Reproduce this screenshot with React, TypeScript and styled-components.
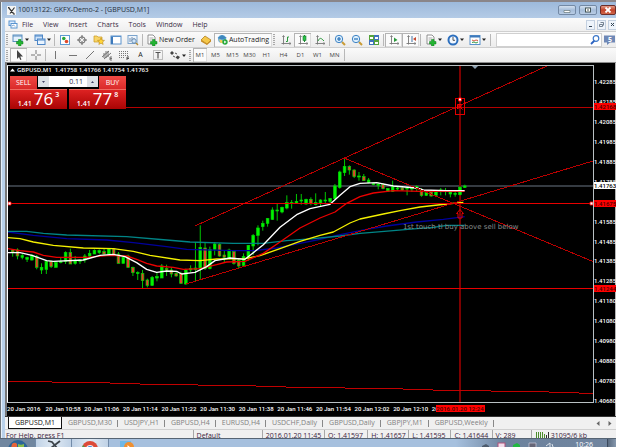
import React from "react";
import styled, { createGlobalStyle, css } from "styled-components";

const UI = '"Open Sans", "Noto Sans", sans-serif';

const Global = createGlobalStyle`
  * { box-sizing: border-box; }
  html, body { margin: 0; background: #fff; overflow: hidden; }
  button, input { font: inherit; color: inherit; margin: 0; padding: 0; border: 0; background: none; }
  svg { display: block; flex: none; }
`;

const Desktop = styled.div`
  display: flex;
  flex-direction: column;
  height: 100vh;
  margin-right: 9px;
  overflow: hidden;
  font: 7px/10px ${UI};
  color: #1c1c1c;
  white-space: nowrap;
`;

const Window = styled.main`
  flex: 1;
  min-height: 0;
  display: flex;
  flex-direction: column;
  padding-left: 5px;
  border-top: 2px solid #8a8589;
  background: linear-gradient(90deg, #6f7478 0 1px, #e6f0fa 1px 2px, #b9d1ea 2px 5px, #f0f0f0 5px);
`;

const TitleBar = styled.header`
  display: flex;
  align-items: center;
  gap: 2px;
  height: 16px;
  margin-left: -3px;
  padding-left: 5px;
  background: linear-gradient(#9db9db, #b4cbe6);
  color: #26303c;
  h1 { flex: 1; margin: 0; font: inherit; }
`;

const Caption = styled.button<{ $close?: boolean }>`
  display: grid;
  place-items: center;
  width: ${(p) => (p.$close ? 16 : 18)}px;
  height: 10px;
  margin-left: 1px;
  border: 1px solid ${(p) => (p.$close ? "#6b2e2a" : "#7389a5")};
  border-radius: 2px;
  background: ${(p) => (p.$close ? "linear-gradient(#e39b88, #c2432b 50%, #d0664a)" : "linear-gradient(#d3e0ef, #a6bdd9 50%, #b9cde5)")};
`;

const MenuBar = styled.nav`
  display: flex;
  align-items: center;
  gap: 10px;
  height: 13px;
  padding-left: 3px;
  background: linear-gradient(#fbfbfb, #efefef);
  color: #3a2c44;
`;
const MenuItem = styled.button`
  height: 11px;
  &:first-of-type { margin-left: -6px; }
`;
const Spacer = styled.span`flex: 1;`;
const MdiButtons = styled.div`display: flex; gap: 2px;`;
const MdiButton = styled.button`
  display: grid;
  place-items: center;
  width: 9px;
  height: 10px;
  border: 1px solid #c3d0e0;
  background: #eef4fb;
  &:last-child { width: 8px; border-right: 0; }
`;

const ToolBar = styled.div<{ $h: number }>`
  display: flex;
  align-items: center;
  height: ${(p) => p.$h}px;
  border-top: 1px solid #cfcfcf;
  background: linear-gradient(#fafafa, #ececec);
`;
const Grip = styled.span`
  width: 2px;
  height: 11px;
  margin: 0 2px 0 1px;
  background: repeating-linear-gradient(#a8a8a8 0 1px, #f0f0f0 1px 2px);
`;
const pressed = css`
  background: #fbfbfb;
  box-shadow: inset 1px 1px 0 #b4b4b4, inset -1px -1px 0 #dcdcdc;
`;
const Tool = styled.button<{ $w?: number; $on?: boolean }>`
  display: flex;
  align-items: center;
  justify-content: center;
  gap: 1px;
  flex: none;
  width: ${(p) => p.$w ?? 17}px;
  height: 14px;
  ${(p) => p.$on && pressed}
`;
const Period = styled(Tool)`
  font-size: 6px;
  color: #444;
`;
const Sep = styled.span`
  width: 1px;
  height: 12px;
  margin: 0 1px;
  background: #b8b8b8;
`;
const Search = styled.label`
  flex: 1;
  display: flex;
  align-items: center;
  height: 14px;
  margin-left: 4px;
  background: #fff;
  border: 1px solid #d0d0d0;
  input { flex: 1; min-width: 0; outline: 0; }
`;

const ChartArea = styled.section`
  flex: 1;
  min-height: 0;
  display: grid;
  grid-template-columns: minmax(0, 1fr) 22px;
  grid-template-rows: minmax(0, 1fr) 13px;
  padding-top: 2px;
  border: solid;
  border-width: 1px 0 0 2px;
  border-color: #8b8b8b #000 #000 #777;
  background: linear-gradient(270deg, #b4b4b4 1px, #000 1px);
`;
const Plot = styled.div`
  position: relative;
  border: 1px solid #b9c0c3;
  border-left-color: #fff;
  > svg { width: 100%; height: 100%; }
`;
const Note = styled.p`
  position: absolute;
  left: 67.5%;
  top: 46%;
  margin: 0;
  font: 7px/12px "DejaVu Sans", sans-serif;
  color: #858b8b;
`;
const ChartTitle = styled.h2`
  position: absolute;
  left: 2px;
  top: 0;
  display: flex;
  align-items: center;
  gap: 2px;
  margin: 0;
  font: 600 6px/8px ${UI};
  color: #fff;
`;
const Trade = styled.div`
  position: absolute;
  left: 2px;
  top: 10px;
  display: grid;
  grid-template-columns: 57px 57px;
  grid-template-rows: 13px 20px;
  gap: 0 2px;
  color: #fff;
`;
const TradeTop = styled.div`
  grid-column: 1 / 3;
  display: flex;
  gap: 1px;
`;
const Side = styled.button`
  width: 27px;
  height: 13px;
  background: linear-gradient(#f04a44, #da2a2a);
  line-height: 11px;
`;
const Volume = styled.div`
  flex: 1;
  display: flex;
  align-items: center;
  height: 11px;
  background: #fff;
  color: #2b2440;
  input { flex: 1; width: 10px; text-align: right; padding-right: 4px; outline: 0; }
  button { display: grid; place-items: center; width: 11px; height: 11px; background: #dde1e6; }
`;
const Quote = styled.button`
  display: flex;
  align-items: flex-end;
  justify-content: center;
  gap: 2px;
  background: linear-gradient(#dd2222, #a90404);
  border-top: 1px solid #f06a60;
  line-height: 10px;
  b { font: 400 17px/20px ${UI}; }
  sup { align-self: flex-start; font: 600 7px/9px ${UI}; }
  span { font-weight: 600; }
`;

const PriceAxis = styled.div`
  position: relative;
  display: flex;
  flex-direction: column;
  justify-content: space-between;
  padding-top: 13px;
  margin-bottom: -2px;
  font: 500 6px/8px Roboto, sans-serif;
  color: #fff;
`;
const Tick = styled.span`
  height: 8px;
`;
const Tag = styled.span<{ $at: number; $live?: boolean }>`
  position: absolute;
  left: 0;
  top: ${(p) => p.$at}%;
  width: 100%;
  height: 7px;
  margin-top: -3px;
  line-height: 7px;
  background: ${(p) => (p.$live ? "#fff" : "#f00")};
  color: ${(p) => (p.$live ? "#000" : "#480000")};
`;
const TimeAxis = styled.div`
  position: relative;
  display: grid;
  grid-template-columns: repeat(12, 5fr) 16fr;
  font: 500 6px/11px Roboto, sans-serif;
  color: #fff;
`;
const TimeTag = styled.span`
  position: absolute;
  left: 73%;
  top: 2px;
  width: 49px;
  height: 7px;
  background: #f00;
  color: #480000;
  line-height: 7px;
  text-align: center;
`;

const Tabs = styled.nav`
  display: flex;
  align-items: center;
  height: 13px;
  padding-left: 3px;
  border-top: 1px solid #333;
  background: #f0f0f0;
  color: #808080;
`;
const Tab = styled.button<{ $on?: boolean }>`
  height: 12px;
  padding: 0 6px;
  line-height: 10px;
  ${(p) =>
    p.$on
      ? css`background: #fff; color: #111; border: 1px solid #111; border-top: 0;`
      : css`background: linear-gradient(#888, #888) right 3px / 1px 7px no-repeat;`}
`;
const TabArrow = styled.button`
  display: grid;
  place-items: center;
  width: 12px;
  height: 10px;
`;

const Status = styled.footer`
  display: grid;
  grid-template-columns: 187fr 69fr 62fr 43fr 41fr 42fr 41fr 39fr 85fr;
  height: 9px;
  overflow: hidden;
  border-top: 1px solid #d0d0d0;
  background: #f0f0f0;
  color: #3c2440;
  span { display: flex; align-items: flex-start; gap: 2px; padding: 0 0 0 3px; line-height: 12px; height: 12px; }
  span + span { border-left: 1px solid #a8a8a8; }
  span:first-child { padding-left: 1px; }
  svg { margin-top: 2px; }
`;

const TaskBar = styled.footer`
  display: flex;
  height: 9px;
  overflow: hidden;
  border-top: 1px solid #566473;
  background: linear-gradient(90deg, #8ba4c1 0, #a6c0de 15%, #a6c0de 74%, #6c829d 82%, #71859f 100%);
`;
const TaskButton = styled.button<{ $w: number; $tone?: "start" | "open" }>`
  display: flex;
  justify-content: center;
  width: ${(p) => p.$w}px;
  height: 9px;
  border-right: 1px solid #728ba9;
  ${(p) => p.$tone === "start" && css`background: #70869f;`}
  ${(p) => p.$tone === "open" && css`background: linear-gradient(90deg, #c0d2e6, #e0eaf4, #c0d2e6);`}
  ${(p) => !p.$tone && css`border-color: transparent;`}
`;
const Tray = styled.div`
  display: flex;
  gap: 7px;
  padding-top: 3px;
  margin-left: auto;
  color: #fff;
  time { margin: 0 14px 0 14px; line-height: 6px; }
`;
const ShowDesktop = styled.button`
  width: 9px;
  height: 9px;
  border-left: 1px solid #3c4a5c;
  background: linear-gradient(90deg, #5a6b80, #8698ad);
`;

/* ---------- icons ---------- */
const Ic = ({ children, w = 12, h = 12 }: { children: React.ReactNode; w?: number; h?: number }) => (
  <svg width={w} height={h} viewBox={`0 0 ${w} ${h}`} fill="none" aria-hidden="true">{children}</svg>
);
const Caret = () => <Ic w={4} h={3}><path d="M0 .5h4L2 3z" fill="#222" /></Ic>;
const Plus = () => <path d="M6.500 5.500h2.500v2h2v2.500H9v2H6.500v-2h-2V7.500h2z" fill="#23b532" stroke="#0d7d1b" strokeWidth=".5" />;
const MtLogo = () => (
  <Ic w={9} h={9}><path d="M0 0h9v9H0z" fill="#f5f5f5" /><path d="M1.500 1.500l5 6M7.500 1.500L3 7.500M6 8h2M1 1.500h1.500" stroke="#333" strokeWidth="1.200" /></Ic>
);
const Doc = () => <Ic w={10} h={9}><rect x="1" y="1" width="6" height="4.500" fill="#dcecff" stroke="#5994cf" /><rect x="3" y="3.500" width="6" height="4.500" fill="#fff" stroke="#5994cf" /><path d="M4 6l1.500-1L7 6.500" stroke="#3a78bc" strokeWidth=".7" /></Ic>;
const NewChart = () => <Ic><rect x="1" y="1" width="9" height="6.500" fill="#e4f1fd" stroke="#5b8fc0" /><path d="M1 2h9" stroke="#5b8fc0" /><Plus /></Ic>;
const Profiles = () => <Ic><rect x="1" y="1" width="7.500" height="5.500" fill="#cfe4fb" stroke="#4d86c6" /><path d="M1 2h8" stroke="#4d86c6" /><rect x="3.500" y="5" width="7.500" height="5.500" fill="#e9f4ff" stroke="#4d86c6" /><path d="M4 6h7" stroke="#4d86c6" /></Ic>;
const Market = () => <Ic><rect x="1.500" y="1.500" width="9" height="9" fill="#fff" stroke="#5e9bd2" /><circle cx="4.800" cy="4.500" r="1.800" fill="#2aa53a" /><circle cx="7.500" cy="7.500" r="1.800" fill="#e14b2b" /></Ic>;
const Target = () => <Ic><circle cx="6" cy="6" r="3.200" stroke="#666" /><path d="M6 1v4M6 7v4M1 6h4M7 6h4" stroke="#666" /></Ic>;
const Star = () => <Ic><path d="M1 2h3l1 1h4v5H1z" fill="#f7d468" stroke="#c99a1e" strokeWidth=".7" /><path d="M8 4l1 2.200 2.500.2-1.900 1.600.6 2.500L8 9.200 5.800 10.500l.6-2.500L4.500 6.400 7 6.200z" fill="#ffd53a" stroke="#b37d10" strokeWidth=".5" /></Ic>;
const Panel = () => <Ic><rect x="1" y="2" width="10" height="8" fill="#fff" stroke="#5b92cc" /><path d="M1 2.500h10" stroke="#5b92cc" /><path d="M2 3v7" stroke="#3d79bb" strokeWidth="2" /></Ic>;
const Tester = () => <Ic><rect x="1" y="1.500" width="9" height="8" fill="#eef5fc" stroke="#7ba3cc" /><path d="M3 4v4M5 3v4M7 4v3" stroke="#718db0" /><circle cx="7" cy="7" r="2.200" fill="#cfe5fa" stroke="#54789c" strokeWidth=".8" /><path d="M9 9l2 2" stroke="#b98b2c" strokeWidth="1.200" /></Ic>;
const Order = () => <Ic><path d="M2 1h5l2 2v7H2z" fill="#fff" stroke="#777" strokeWidth=".8" /><path d="M3.500 4h4M3.500 6h3" stroke="#888" strokeWidth=".7" /><Plus /></Ic>;
const Gold = () => <Ic><path d="M1 6l4-4 6 4-4 4z" fill="#f5c84a" stroke="#a87412" strokeWidth=".7" /><path d="M1 6l6 4 4-4v1.500L7 11 1 7.500z" fill="#c98a1b" /></Ic>;
const Auto = () => <Ic w={11} h={11}><circle cx="5" cy="5" r="4" fill="#6fb0dc" /><path d="M.5 4L5 1l5 3-5 1.500z" fill="#3f87bd" /><path d="M2 5.500L5 6l2 3H3.500z" fill="#f0cf58" /><circle cx="8" cy="8" r="2.700" fill="#27a83b" /><path d="M7.200 6.500L9.500 8 7.200 9.500z" fill="#fff" /></Ic>;
const Axes = () => <path d="M3.500 2v8.500M1.500 9.500h9M2.500 3l1-1.500L4.500 3M9.500 8.500l1.500 1-1.500 1" stroke="#777" strokeWidth=".9" />;
const Bars = () => <Ic><Axes /><path d="M6 7.500h1.500V3H9" stroke="#2b9a3c" /></Ic>;
const Candle = () => <Ic><Axes /><path d="M7.500 1v7" stroke="#1c8c2e" /><rect x="6" y="2" width="3" height="4.500" fill="#2cc24a" stroke="#15792a" strokeWidth=".6" /></Ic>;
const LineC = () => <Ic><Axes /><path d="M4 7C6 3 7 4 10 7" stroke="#2b9a3c" /></Ic>;
const Zoom = ({ out }: { out?: boolean }) => <Ic><path d="M8 8l3 3" stroke="#c99b35" strokeWidth="2" /><circle cx="5" cy="5" r="3.700" fill="#dceffd" stroke="#3e83c4" /><path d={out ? "M3 5h4" : "M3 5h4M5 3v4"} stroke="#226db5" strokeWidth="1.200" /></Ic>;
const Tile = () => <Ic><path d="M1 1h5v5H1zM6 6h5v5H6z" fill="#55a33a" /><path d="M6 1h5v5H6zM1 6h5v5H1z" fill="#3f72bd" /><path d="M2 3h3v2H2zM7 3h3v2H7zM2 8h3v2H2zM7 8h3v2H7z" fill="#fff" /></Ic>;
const Scroll = () => <Ic><Axes /><path d="M6 3.500L9.500 6 6 8z" fill="#2b9a3c" /></Ic>;
const Shift = () => <Ic><Axes /><path d="M7 2v6" stroke="#4477aa" /><path d="M8 5l3-2v4z" fill="#c4472c" /></Ic>;
const Clock = () => <Ic><circle cx="6" cy="6" r="4.500" fill="#f2f8ff" stroke="#2c6fbe" strokeWidth="2" /><path d="M6 3v3.300h2" stroke="#444" strokeWidth=".9" /></Ic>;
const Template = () => <Ic><rect x="1" y="1.500" width="10" height="9" fill="#fff" stroke="#5b92cc" /><path d="M1 2.500h10" stroke="#3d79bb" strokeWidth="2" /><path d="M3 6l2 1 2-1 2 .500" stroke="#d2583e" /><path d="M3 8.500l2-.5 2 1 2-1" stroke="#389a49" /></Ic>;
const D = ({ d }: { d: string }) => <Ic><path d={d} stroke="#666" strokeWidth=".9" /></Ic>;
const Pointer = () => <Ic><path d="M4 1v9l2-2 1.300 3 1.200-.6L7.200 7.500H10z" fill="#444" /></Ic>;

/* ---------- chart data ----------
   Each candle: high, body top, body bottom, low (thirds of a pixel), 1 = falling. */
const candles: number[][] = [
  [388,390,396,410,1],[385,390,408,418,1],[400,407,412,418,0],[410,412,418,426,0],[402,406,420,422,0],[405,410,442,448,1],
  [430,442,450,462,0],[420,424,448,462,0],[422,424,440,444,1],[424,428,442,442,0],[412,424,428,430,0],[394,398,424,432,0],
  [386,398,432,432,1],[408,422,430,434,0],[418,420,424,432,0],[402,408,420,428,0],[390,400,408,410,0],[388,392,402,402,0],
  [388,392,398,402,0],[386,395,402,406,1],[384,386,402,408,0],[384,386,404,408,1],[396,402,430,430,1],[408,412,430,430,0],
  [404,408,442,444,1],[440,442,458,468,1],[454,458,461,480,0],[450,460,482,505,1],[476,480,496,502,1],[468,472,496,498,0],
  [458,470,474,484,0],[432,438,474,474,0],[434,446,450,468,1],[442,450,462,472,1],[455,460,468,470,1],[455,460,490,492,1],
  [446,450,492,494,0],[436,446,450,456,0],[366,444,448,484,0],[316,382,444,480,0],[366,384,446,450,1],[380,388,446,448,0],
  [366,372,388,406,0],[370,374,408,410,1],[392,405,412,426,1],[386,390,415,418,0],[390,394,430,434,1],[416,422,438,446,1],
  [400,410,436,438,0],[375,376,410,422,0],[342,346,378,405,0],[316,324,346,376,0],[302,310,320,332,0],[294,296,310,320,0],
  [262,270,298,300,0],[252,270,273,302,0],[260,262,276,280,0],[226,248,264,268,0],[240,248,251,266,0],[222,244,250,252,0],
  [222,240,243,254,0],[236,238,252,254,0],[232,238,250,256,1],[220,248,254,256,0],[238,240,250,260,0],[216,240,243,252,0],
  [234,236,244,250,0],[192,198,236,238,0],[152,156,202,206,0],[116,140,158,168,0],[136,140,150,164,1],[148,150,170,174,1],
  [156,168,171,182,0],[162,170,182,182,1],[174,180,188,190,0],[188,190,194,196,0],[188,192,196,208,0],[190,194,206,208,1],
  [204,206,214,216,0],[182,200,214,216,0],[198,204,207,212,0],[198,204,210,212,1],[200,204,207,226,0],[200,204,207,216,0],
  [196,200,206,214,0],[205,210,226,230,1],[212,218,226,228,0],[210,216,228,230,1],[210,214,226,230,0],[204,210,213,226,0],
  [204,212,215,226,0],[212,216,222,232,0],[216,220,223,230,0],[198,202,224,226,0],[194,198,202,204,0],
];
const averages: [string, string][] = [
  ["#00009c", "24,336 100,346 200,356 320,360 400,368 500,380 560,388 700,392 760,392 830,384 900,370 960,358 1020,344 1100,328 1160,318 1250,306 1330,298 1394,290"],
  ["#008486", "24,334 80,334 130,340 200,345 380,350 500,360 570,366 700,370 790,370 860,362 940,356 1020,348 1080,340 1180,332 1250,326 1300,322 1340,316 1394,316"],
  ["#f4f000", "24,353 60,356 100,366 160,376 250,384 340,386 400,394 450,406 540,420 600,422 650,417 735,416 780,407 840,386 900,364 960,346 1000,336 1050,309 1080,297 1150,282 1200,272 1260,261 1340,252 1390,247"],
  ["#ec0000", "24,386 60,392 100,396 130,406 170,412 260,412 330,406 380,408 410,418 440,430 470,438 520,442 550,448 600,446 650,434 680,426 735,424 790,400 840,366 900,324 960,294 1005,276 1040,250 1080,230 1120,219 1180,212 1260,214 1394,214"],
  ["#fff", "24,398 60,398 96,406 140,422 160,424 250,420 300,406 340,403 375,410 410,428 440,448 470,457 500,453 530,454 545,462 585,457 620,440 645,422 690,414 735,418 790,374 840,322 890,284 930,266 990,253 1020,226 1050,200 1080,190 1130,188 1180,198 1250,204 1270,210 1340,212 1394,212"],
];

const PlotDrawing = () => (
  <svg viewBox="8 66 585 336" preserveAspectRatio="none" fill="none" role="img" aria-label="GBPUSD one minute candles">
    <path d="M8 186H593" stroke="#353b42" strokeWidth="2" />
    <path d="M460 66V402" stroke="#7c0000" strokeWidth="2" />
    <g transform="translate(0 120) scale(.33333)">
      {candles.map(([hi, top, bottom, lo, down], i) => {
        const x = 38 + i * 14.43;
        return (
          <g key={i}>
            <path d={`M${x} ${hi}V${lo}`} stroke="#00c800" strokeWidth="3" />
            <rect x={x - 4} y={top} width="8" height={bottom - top} fill={down ? "#e8402a" : "#00f400"} stroke="#00d800" strokeWidth="2" />
          </g>
        );
      })}
      {averages.map(([color, points]) => (
        <polyline key={color} points={points} stroke={color} strokeWidth="4" strokeLinejoin="round" />
      ))}
    </g>
    <g shapeRendering="crispEdges">
      <path d="M195 226L547 66M186 284L593 161M344 158L593 261.500" stroke="#b80000" />
      <path d="M126 107.500H593" stroke="#b40000" />
      <path d="M8 203.500H593M8 288.500H593" stroke="#e80000" />
      <path d="M8 381.500H52M52 382.500H110M110 383.500H140M140 384.500H198M198 385.500H256M256 386.500H286M286 387.500H345M345 388.500H403M403 389.500H433M433 390.500H491M491 391.500H549M549 392.500H579M579 393.500H593" stroke="#c00000" />
    </g>
    <rect x="455.500" y="98.500" width="9" height="16" stroke="#e00000" />
    <path d="M457.500 109v-4.500h4M458 104.500l4.500 5M458 108.500l4-3" stroke="#f00" />
    <path d="M458.500 98h3v3h-3z" fill="#fff" stroke="#f00" />
    <path d="M456.500 213.500l3.500-4 3.500 4h-1.500v4.500h-4v-4.500z" stroke="#e80000" />
    <path d="M472 66h6l-3 3z" fill="#8fa3b5" />
    <path d="M8 202h3v3H8zM590 202h3v3h-3z" fill="#fff" stroke="#f00" strokeWidth=".8" />
  </svg>
);

/* The empty step lies under the 1.41675 level tag. */
const prices = ["1.42285","1.42185","1.42085","1.41985","1.41885","1.41785","","1.41585","1.41485","1.41385","1.41285","1.41180","1.41080","1.40980","1.40880","1.40780","1.40680"];
const times = ["20 Jan 2016","20 Jan 10:58","20 Jan 11:06","20 Jan 11:14","20 Jan 11:22","20 Jan 11:30","20 Jan 11:38","20 Jan 11:46","20 Jan 11:54","20 Jan 12:02","20 Jan 12:10","20"];
const tabs = ["GBPUSD,M1","GBPUSD,M30","USDJPY,H1","GBPUSD,H4","EURUSD,H4","USDCHF,Daily","GBPUSD,Daily","GBPJPY,M1","GBPUSD,Weekly"];

export default function App() {
  return (
    <>
      <Global />
      <Desktop>
        <Window>
          <TitleBar>
            <MtLogo />
            <h1>10013122: GKFX-Demo-2 - [GBPUSD,M1]</h1>
            <Caption aria-label="Minimize"><Ic w={8} h={6}><path d="M1 3.500h6v2H1z" fill="#fff" stroke="#566" strokeWidth=".6" /></Ic></Caption>
            <Caption aria-label="Restore"><Ic w={8} h={6}><rect x="1.500" y="1" width="5" height="4" fill="#fff" stroke="#455" /><path d="M3 3h2" stroke="#455" /></Ic></Caption>
            <Caption $close aria-label="Close"><Ic w={8} h={6}><path d="M1.500.5l5 5M6.500.5l-5 5" stroke="#fff" strokeWidth="1.800" /></Ic></Caption>
          </TitleBar>
          <MenuBar>
            <Doc />
            {["File", "View", "Insert", "Charts", "Tools", "Window", "Help"].map((m) => <MenuItem key={m}>{m}</MenuItem>)}
            <Spacer />
            <MdiButtons>
              <MdiButton aria-label="Minimize chart"><Ic w={7} h={7}><path d="M2 5.500h3" stroke="#345" /></Ic></MdiButton>
              <MdiButton aria-label="Restore chart"><Ic w={7} h={7}><path d="M2.500 1.500h3v3M1.500 3.500h3v2h-3z" stroke="#567" strokeWidth=".8" /></Ic></MdiButton>
              <MdiButton aria-label="Close chart"><Ic w={7} h={7}><path d="M2 2l3 3M5 2L2 5" stroke="#345" /></Ic></MdiButton>
            </MdiButtons>
          </MenuBar>
          <ToolBar $h={16}>
            <Grip />
            <Tool $w={21} aria-label="New chart"><NewChart /><Caret /></Tool>
            <Tool $w={22} aria-label="Profiles"><Profiles /><Caret /></Tool>
            <Sep />
            <Tool aria-label="Market watch"><Market /></Tool>
            <Tool aria-label="Data window"><Target /></Tool>
            <Tool aria-label="Navigator"><Star /></Tool>
            <Tool aria-label="Terminal"><Panel /></Tool>
            <Tool aria-label="Strategy tester"><Tester /></Tool>
            <Sep />
            <Tool $w={53}><Order />New Order</Tool>
            <Tool aria-label="MetaEditor"><Gold /></Tool>
            <Tool $w={58} $on><Auto />AutoTrading</Tool>
            <Grip />
            <Tool aria-label="Bar chart"><Bars /></Tool>
            <Tool $on aria-label="Candlesticks"><Candle /></Tool>
            <Tool aria-label="Line chart"><LineC /></Tool>
            <Sep />
            <Tool aria-label="Zoom in"><Zoom /></Tool>
            <Tool aria-label="Zoom out"><Zoom out /></Tool>
            <Tool aria-label="Tile windows"><Tile /></Tool>
            <Sep />
            <Tool $on aria-label="Auto scroll"><Scroll /></Tool>
            <Tool $on aria-label="Chart shift"><Shift /></Tool>
            <Sep />
            <Tool $w={22} aria-label="Indicators"><Order /><Caret /></Tool>
            <Tool $w={22} aria-label="Periods"><Clock /><Caret /></Tool>
            <Tool $w={23} aria-label="Templates"><Template /><Caret /></Tool>
            <Sep />
            <Search>
              <input aria-label="Search" />
              <Ic><path d="M5.500 6.500L2 10" stroke="#2c62c0" strokeWidth="1.800" /><circle cx="7" cy="4.500" r="2.800" stroke="#3a76c8" strokeWidth="1.200" /></Ic>
            </Search>
            <Tool $w={14} aria-label="5 messages"><Ic><path d="M1 1.500h11v7H7L4 11V8.500H1z" fill="#6f88b6" /><text x="7" y="7.500" fontFamily="Open Sans" fontSize="7" fontWeight="700" fill="#fff" textAnchor="middle">5</text></Ic></Tool>
          </ToolBar>
          <ToolBar $h={15}>
            <Grip />
            <Tool $on aria-label="Cursor"><Pointer /></Tool>
            <Tool aria-label="Crosshair"><D d="M6 1v4M6 7v4M1 6h4M7 6h4" /></Tool>
            <Sep />
            <Tool aria-label="Vertical line"><D d="M5.500 2v8" /></Tool>
            <Tool aria-label="Horizontal line"><D d="M2 6.500h8" /></Tool>
            <Tool aria-label="Trend line"><D d="M2 10l8-8" /></Tool>
            <Tool aria-label="Channel"><D d="M1 8l7-6M3 10l7-6M3 4v5M5 2v7M7 2v6M9 8h2M9 8v3h2M9 9.500h2" /></Tool>
            <Tool aria-label="Fibonacci"><Ic><path d="M1 2.500h9M1 4.500h9M1 6.500h9M1 8.500h6" stroke="#777" strokeDasharray="1 1" /><path d="M9 11V8h2M9 9.500h2" stroke="#555" /></Ic></Tool>
            <Tool aria-label="Text">A</Tool>
            <Tool aria-label="Label"><Ic><rect x="1.500" y="1.500" width="9" height="9" stroke="#888" strokeDasharray="1 1" /><path d="M3.500 3.500h5M6 3.500v6" stroke="#555" strokeWidth="1.200" /></Ic></Tool>
            <Tool $w={22} aria-label="Arrows"><Ic><path d="M1 4l2-2 2 2-2 2zM6.500 8.500l2-2 2.500 1.500-2 2.500z" fill="#444" /><path d="M4 7l2 1M6 4l2 1" stroke="#555" /></Ic><Caret /></Tool>
            <Grip />
            <Period $w={14} $on>M1</Period>
            {["M5", "M15", "M30", "H1", "H4", "D1", "W1", "MN"].map((p) => <Period key={p}>{p}</Period>)}
            <Sep />
          </ToolBar>
          <ChartArea>
            <Plot>
              <PlotDrawing />
              <ChartTitle><Ic w={5} h={4}><path d="M0 3.500h5L2.500.5z" fill="#fff" /></Ic>GBPUSD,M1&nbsp; 1.41758 1.41766 1.41754 1.41763</ChartTitle>
              <Trade>
                <TradeTop>
                  <Side>SELL</Side>
                  <Volume>
                    <button aria-label="Less"><Ic w={3} h={2}><path d="M0 0h3L1.500 2z" fill="#446" /></Ic></button>
                    <input aria-label="Volume" defaultValue="0.11" />
                    <button aria-label="More"><Ic w={3} h={2}><path d="M0 2h3L1.500 0z" fill="#446" /></Ic></button>
                  </Volume>
                  <Side>BUY</Side>
                </TradeTop>
                <Quote><span>1.41</span><b>76</b><sup>3</sup></Quote>
                <Quote><span>1.41</span><b>77</b><sup>8</sup></Quote>
              </Trade>
              <Note>1st touch tl buy above sell below</Note>
            </Plot>
            <PriceAxis>
              {prices.map((p, i) => <Tick key={i}>{p}</Tick>)}
              <Tag $at={12}>1.42168</Tag>
              <Tag $at={35.4} $live>1.41763</Tag>
              <Tag $at={40.5}>1.41675</Tag>
              <Tag $at={65.6}>1.41244</Tag>
            </PriceAxis>
            <TimeAxis>
              {times.map((t) => <span key={t}>{t}</span>)}
              <TimeTag>2016.01.20 12:24</TimeTag>
            </TimeAxis>
          </ChartArea>
          <Tabs>
            {tabs.map((t, i) => <Tab key={t} $on={i === 0}>{t}</Tab>)}
            <Spacer />
            <TabArrow aria-label="Previous"><Ic w={4} h={5}><path d="M3.500 0v5L.5 2.500z" fill="#666" /></Ic></TabArrow>
            <TabArrow aria-label="Next"><Ic w={4} h={5}><path d="M.5 0v5l3-2.500z" fill="#666" /></Ic></TabArrow>
          </Tabs>
          <Status>
            <span>For Help, press F1</span><span>Default</span><span>2016.01.20 11:45</span><span>O: 1.41597</span><span>H: 1.41657</span><span>L: 1.41595</span><span>C: 1.41644</span><span>V: 289</span>
            <span><Ic w={14} h={8}><path d="M1.500 0v8M3.500 0v8M5.500 0v8M7.500 0v8M9.500 2v6" stroke="#4c8d2c" /><path d="M11.500 3v5M13.500 0v8" stroke="#333" /></Ic>31095/6 kb</span>
          </Status>
        </Window>
        <TaskBar>
          <TaskButton $w={36} $tone="start" aria-label="Start"><Ic w={22} h={9}><circle cx="11" cy="11" r="10" fill="#2c6597" /><path d="M5 5c2-2 4-1 5 0v4H4z" fill="#e5643a" /><path d="M11 5c2 1 4 1 6 0v4h-6z" fill="#8abf4b" /></Ic></TaskButton>
          <TaskButton $w={36} $tone="open" aria-label="MetaTrader"><Ic w={14} h={9}><path d="M1 2l4 1 5 6M13 2L4 9" stroke="#3c434a" strokeWidth="1.800" /></Ic></TaskButton>
          <TaskButton $w={37} $tone="open" aria-label="Chrome"><Ic w={18} h={9}><circle cx="9" cy="10" r="8" fill="#dc4a38" /><path d="M1 10a8 8 0 011-4l4 4z" fill="#43a047" /><circle cx="9" cy="10" r="4" fill="#f5f5f5" /><circle cx="9" cy="10" r="3" fill="#4488e0" /></Ic></TaskButton>
          <TaskButton $w={37} aria-label="Media"><Ic w={16} h={9}><rect x="1" y="2" width="11" height="8" fill="#6fb7e6" /><circle cx="10" cy="8" r="5" fill="#ef9032" /><path d="M8.500 6v4l3-1.500z" fill="#fff" /></Ic></TaskButton>
          <Tray>
            <Ic w={8} h={6}><path d="M0 4l4-2 3 2v2H0z" fill="#4d5b6d" /></Ic>
            <Ic w={9} h={6}><rect x="1" y="1" width="7" height="6" fill="#f2dcea" stroke="#b0527a" /></Ic>
            <Ic w={8} h={6}><path d="M0 3l4-2 3 2v3H0z" fill="#21b841" /></Ic>
            <Ic w={10} h={6}><path d="M1 1h7v5H1z" fill="#667" stroke="#ccd" strokeWidth=".7" /></Ic>
            <Ic w={9} h={6}><path d="M1 4l4-3v5M7 2l1 3" stroke="#dde3ea" /></Ic>
            <time>10:26</time>
          </Tray>
          <ShowDesktop aria-label="Show desktop" />
        </TaskBar>
      </Desktop>
    </>
  );
}
